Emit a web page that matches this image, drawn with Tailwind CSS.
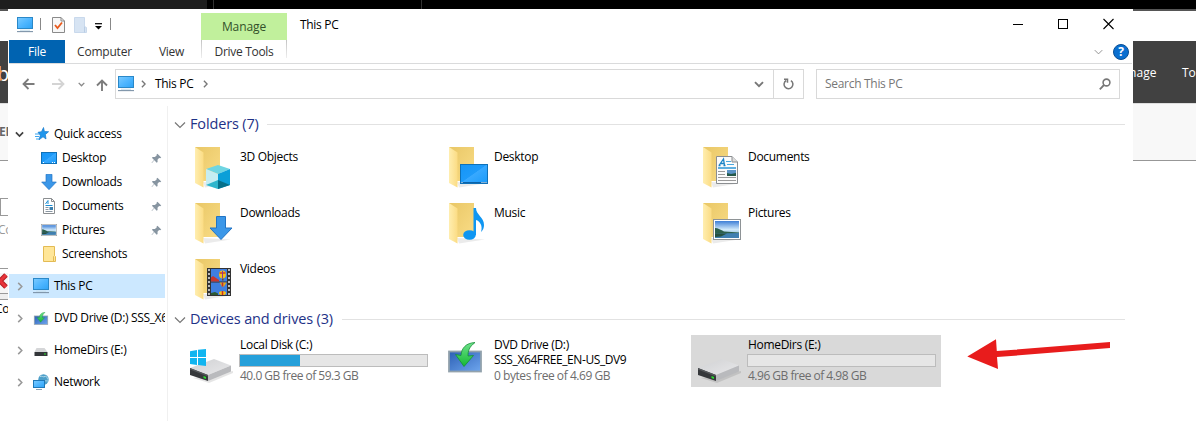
<!DOCTYPE html>
<html lang="en">
<head>
<meta charset="utf-8">
<title>This PC</title>
<script src="https://cdn.jsdelivr.net/npm/@tailwindcss/browser@4"></script>
</head>
<body class="relative h-[421px] w-[1196px] overflow-hidden bg-white font-['Open_Sans',sans-serif] text-[12px] leading-4 tracking-[-0.3px] text-black">

<svg class="absolute h-0 w-0">
  <defs>
    <linearGradient id="scr" x1="0" y1="0" x2="1" y2="1"><stop offset="0" stop-color="#7ccbff"/><stop offset=".5" stop-color="#4fb6ff"/><stop offset="1" stop-color="#2ea3f5"/></linearGradient>
    <linearGradient id="desk" x1="0" y1="0" x2="1" y2="1"><stop offset="0" stop-color="#1495f7"/><stop offset=".48" stop-color="#1e9bfa"/><stop offset=".5" stop-color="#38a9ff"/><stop offset="1" stop-color="#1a9bfa"/></linearGradient>
    <linearGradient id="fback" x1="0" y1="0" x2="1" y2="1"><stop offset="0" stop-color="#e9c766"/><stop offset="1" stop-color="#f9dc86"/></linearGradient>
    <linearGradient id="ffront" x1="0" y1="0" x2="1" y2="0"><stop offset="0" stop-color="#ffeeb0"/><stop offset="1" stop-color="#fbdc84"/></linearGradient>
    <linearGradient id="dtop" x1="0" y1="0" x2="1" y2="1"><stop offset="0" stop-color="#d0d1d3"/><stop offset="1" stop-color="#e8e8ea"/></linearGradient>
    <linearGradient id="sky" x1="0" y1="0" x2="0" y2="1"><stop offset="0" stop-color="#3e7fd6"/><stop offset=".5" stop-color="#cfe8fa"/><stop offset="1" stop-color="#5f9fc4"/></linearGradient>
    <linearGradient id="dvd" x1="0" y1="0" x2="1" y2="1"><stop offset="0" stop-color="#2c5fb4"/><stop offset="1" stop-color="#6ea6ee"/></linearGradient>
    <linearGradient id="grn" x1="0" y1="0" x2="0" y2="1"><stop offset="0" stop-color="#6fe28c"/><stop offset="1" stop-color="#14b832"/></linearGradient>
    <symbol id="pc" viewBox="0 0 16 16"><rect x=".5" y=".5" width="15" height="11" fill="url(#scr)" stroke="#2a88c8"/><path d="M3 13.2h10" stroke="#c5dcea" stroke-width="1"/><path d="M0 14.6h16" stroke="#7d93a8" stroke-width="1.1"/></symbol>
    <symbol id="down" viewBox="0 0 24 24"><path d="M7.500.5h9v11.500h6.500L12 23.500 1 12h6.500z" fill="#3b97e8" stroke="#2274c4"/></symbol>
    <symbol id="deskicon" viewBox="0 0 28 20"><rect x=".5" y=".5" width="27" height="19" fill="url(#desk)" stroke="#0f71b8"/><path d="M1 18.500h26" stroke="#0b62a8"/><path d="M1.500 18.500h1m19 0h1m1 0h1m1 0h1" stroke="#fff"/></symbol>
    <symbol id="docicon" viewBox="0 0 22 28"><path d="M.5.5h15.500l5.500 5.500v21.500H.5z" fill="#fbfbfb" stroke="#8b8e91"/><path d="M16 .5v5.500h5.500" fill="#ddd" stroke="#8b8e91"/><path d="M3 9.500l4.500-6.500 1 6.500M4.500 7.500h4M2.500 9.500h2M7.500 9.500h2" fill="none" stroke="#1b83c6" stroke-width="1.300"/><path d="M10 5.500h5M11 8.500h7" stroke="#4aa7de"/><path d="M2 12h18" stroke="#1c8ed4" stroke-width="1.400"/><path d="M2 15.500h7M2 18.500h7M2 21.500h18M2 24.500h18" stroke="#999"/><rect x="11" y="14" width="9" height="6" fill="#5b94c8"/><path d="M11 17l4 1 5-1v3h-9z" fill="#265a4a"/></symbol>
    <symbol id="picicon" viewBox="0 0 28 21"><rect x=".5" y=".5" width="27" height="20" fill="#fff" stroke="#8e9396"/><rect x="2" y="2" width="24" height="17" fill="url(#sky)"/><path d="M2 9c3 0 6 2 9 3.500l15 1v1.500H2z" fill="#2c5f4c"/><path d="M2 14.500l24-.5v5H2z" fill="#3f7fb0"/><path d="M2 14.500h12l-6 3-6 .5z" fill="#26503f"/></symbol>
    <symbol id="pin" viewBox="0 0 12 12"><path d="M7 .8L11.200 5l-1.200.6-1.200-.2-1.700 2 .1 2.300-1 .8-2.500-2.500L1 11l-.4-.4L3.300 7.600 1 5.300l.9-1 2.300.1 2-1.700L6 1.800z" fill="#8795a1"/></symbol>
    <symbol id="chev" viewBox="0 0 6 10"><path d="M1 1l4 4-4 4" fill="none" stroke="currentColor" stroke-width="1.700"/></symbol>
    <symbol id="vee" viewBox="0 0 12 8"><path d="M1 1.500l5 5 5-5" fill="none" stroke="currentColor" stroke-width="1.200"/></symbol>
    <symbol id="veeb" viewBox="0 0 10 7"><path d="M1 1.200l4 4 4-4" fill="none" stroke="currentColor" stroke-width="1.900"/></symbol>
    <symbol id="folder" viewBox="0 0 40 42"><path d="M8 35l28 1.500-26 4z" fill="#000" opacity=".08"/><path d="M0 0h25v34H8z" fill="url(#fback)"/><path d="M0 0l8.500 5.500v35L0 36z" fill="url(#ffront)"/></symbol>
    <symbol id="drive" viewBox="0 0 44 24"><path d="M4 19l16 5 24-10v-2z" fill="#000" opacity=".1"/><path d="M1 9L25 0l17 6.500-23 9.500z" fill="url(#dtop)"/><path d="M19 16l23-9.500v6L19 22z" fill="#b9babd"/><path d="M1 9l18 7v6L1 16z" fill="#36383b"/><path d="M1 9l18 7v1.500L1 10.500z" fill="#55585b"/><path d="M14.500 17l2.500.9v2l-2.500-.9z" fill="#28e02b"/></symbol>
    <symbol id="dvdicon" viewBox="0 0 34 31"><rect x="1" y="9.500" width="32" height="20" fill="url(#dvd)" stroke="#93a2ac" stroke-width="1.800"/><path d="M27 0.500C18 1 13.500 6 13 13.500L7.500 12.500 16 24.500 25.500 13.500 20 14c0-5 1-9 7-13.500z" fill="url(#grn)" stroke="#158f36" stroke-width=".8"/></symbol>
  </defs>
</svg>

<!-- application behind the explorer window -->
<div class="flex h-[421px] flex-col overflow-hidden">
  <div class="flex h-[9px] shrink-0"><div class="w-[207px] bg-[#1e1e1e]"></div><div class="w-[6px] bg-black"></div><div class="w-px bg-[#333]"></div><div class="w-[207px] bg-black"></div><div class="w-px bg-[#333]"></div><div class="flex-1 bg-black"></div></div>
  <div class="h-[2px] shrink-0 bg-[#555]"></div>
  <div class="h-[30px] shrink-0 bg-white"></div>
  <div class="flex h-[62px] shrink-0 items-center justify-between bg-[#414141] text-[12px] text-white">
    <span class="relative -left-[3px] top-[2px] text-[20px] leading-6"><span class="absolute left-0 top-0 h-5 w-[5px] overflow-hidden text-[#f09030]">b</span>b</span>
    <div class="flex w-[74px] justify-between whitespace-nowrap pt-[2px] tracking-[0px]"><span>Image</span><span class="w-[14px]">Tools</span></div>
  </div>
  <div class="flex h-[58px] shrink-0 items-center border-b border-t border-b-[#979797] border-t-[#ddd] bg-[#f8f8f8]"><span class="-ml-px text-[12px] font-bold text-[#666]">EN</span></div>
  <div class="flex w-2 flex-1 flex-col overflow-hidden">
    <div class="mt-[37px] h-[18px] w-4 shrink-0 border border-[#999]"></div>
    <div class="-ml-[2px] mt-[6px] shrink-0 text-[12px] text-[#999]">Co</div>
    <div class="mt-[30px] h-px shrink-0 bg-[#999]"></div>
    <div class="mt-[4px] h-[20px] shrink-0 bg-[#f5f5f5]"><svg class="-ml-2 h-4 w-4" viewBox="0 0 16 16"><path d="M2 2l12 12M14 2L2 14" stroke="#b32025" stroke-width="5"/><path d="M2 2l12 12M14 2L2 14" stroke="#e8343a" stroke-width="3"/></svg></div>
    <div class="h-[7px] shrink-0 border-b border-t border-[#999] bg-[#eee]"></div>
    <div class="-ml-[5px] mt-px shrink-0">Co</div>
  </div>
</div>

<!-- explorer window -->
<div class="absolute left-2 top-[9px] flex h-[412px] w-[1125px] flex-col bg-white pl-px">
  <!-- title bar -->
  <div class="flex h-[31px] shrink-0">
    <div class="flex w-[192px] items-start pl-2 pt-2">
      <svg class="h-4 w-4"><use href="#pc"/></svg>
      <div class="ml-[7px] mt-px h-3 w-px bg-[#888]"></div>
      <svg class="ml-[11px] h-4 w-[13px]" viewBox="0 0 13 16"><path d="M.5.5h8.500l3.500 3.500v11.500H.5z" fill="#f7f7f7" stroke="#8a8a8a"/><path d="M9 .5v3.500h3.500" fill="none" stroke="#8a8a8a"/><path d="M3 8l2.500 3L10 5.500" fill="none" stroke="#e8591c" stroke-width="1.800"/></svg>
      <svg class="ml-[9px] h-4 w-[13px]" viewBox="0 0 13 16"><path d="M.5.5h10v9l2 1v5H.5z" fill="#d7e4f3" stroke="#c9d9ec"/><path d="M10.500 9.500v6" stroke="#b9cde4"/></svg>
      <svg class="ml-2 mt-[6px] h-[7px] w-[7px]" viewBox="0 0 7 7"><path d="M0 .7h7" stroke="#000" stroke-width="1.200"/><path d="M0 3h7L3.500 6.500z"/></svg>
      <div class="ml-2 mt-px h-3 w-px bg-[#888]"></div>
    </div>
    <div class="mt-1 flex w-[86px] items-center justify-center bg-[#c1f09c] pt-px tracking-[-0.1px] text-[#33502a]">Manage</div>
    <span class="ml-[13px] mt-2">This PC</span>
    <div class="ml-auto flex items-start pr-[19px] pt-[9px]">
      <svg class="mr-[35px] h-[12px] w-[10px]" viewBox="0 0 10 12"><path d="M0 6.500h10" stroke="#000"/></svg>
      <svg class="mr-[35px] h-[12px] w-[10px]" viewBox="0 0 10 12"><rect x=".5" y="1.500" width="9" height="9" fill="none" stroke="#000"/></svg>
      <svg class="h-[12px] w-[11px]" viewBox="0 0 11 12"><path d="M.5 1l10 10M10.500 1l-10 10" stroke="#000" stroke-width="1.100"/></svg>
    </div>
  </div>
  <!-- ribbon tabs -->
  <div class="mr-px flex h-[24px] shrink-0 border-b border-[#dadbdc] pt-0 text-[#333]">
    <div class="flex w-14 items-center justify-center bg-[#0063b1] text-white">File</div>
    <div class="flex w-[79px] items-center justify-center pt-px tracking-[-0.2px]">Computer</div>
    <div class="flex w-[55px] items-center justify-center pt-px">View</div><div class="w-[2px]"></div>
    <div class="flex w-[86px] items-center justify-center"><div class="mb-auto h-[18px] w-px bg-gradient-to-b from-[#c4c4c4] to-[#eee]"></div><span class="flex-1 pt-px text-center">Drive Tools</span><div class="mb-auto h-[18px] w-px bg-gradient-to-b from-[#c4c4c4] to-[#eee]"></div></div>
    <div class="ml-auto flex items-center pr-[3px]">
      <svg class="mr-[10px] h-[6px] w-[9px] text-[#888]"><use href="#vee"/></svg>
      <div class="flex h-4 w-4 items-center justify-center rounded-full border border-[#0a4f94] bg-[#0a6fd0] text-[12px] font-bold text-white">?</div>
    </div>
  </div>
  <!-- address row -->
  <div class="flex h-[42px] shrink-0 items-start pt-[5px] text-[#777]">
    <div class="flex h-[30px] w-[106px] items-center pl-[13px]">
      <svg class="h-[12px] w-[13px]" viewBox="0 0 13 12"><path d="M12.500 6H1.500M6.500 1L1.500 6l5 5" fill="none" stroke="#7c7c7c" stroke-width="1.800"/></svg>
      <svg class="ml-[17px] h-[12px] w-[13px]" viewBox="0 0 13 12"><path d="M0 6h11.500M6.500 1l5 5-5 5" fill="none" stroke="#d4d4d4" stroke-width="1.800"/></svg>
      <svg class="ml-[13px] h-[5px] w-[7px] text-[#888]"><use href="#veeb"/></svg>
      <svg class="ml-[11px] mt-[2px] h-[12px] w-[12px]" viewBox="0 0 12 12"><path d="M6 12V1.500M1 6.500l5-5 5 5" fill="none" stroke="#7c7c7c" stroke-width="1.900"/></svg>
    </div>
    <div class="flex h-[30px] w-[689px] items-center border border-[#d9d9d9] pl-[2px]">
      <svg class="h-4 w-4"><use href="#pc"/></svg>
      <svg class="ml-[7px] h-[8px] w-[5px]"><use href="#chev"/></svg>
      <span class="ml-[9px] w-[40px] whitespace-nowrap text-black">This PC</span>
      <svg class="ml-[8px] h-[8px] w-[5px]"><use href="#chev"/></svg>
      <svg class="ml-auto mr-[9px] mt-px h-[7px] w-[10px]"><use href="#veeb"/></svg>
      <div class="flex h-full w-[30px] items-center justify-center border-l border-[#d9d9d9]"><svg class="h-[12px] w-[11px]" viewBox="0 0 11 12"><path d="M3.200 2.500a4.400 4.400 0 1 0 4.700.1M1 1.200h3.500v3.600" fill="none" stroke="#777" stroke-width="1.500"/></svg></div>
    </div>
    <div class="ml-3 flex h-[30px] w-[304px] items-center justify-between border border-[#d9d9d9] pl-2 pr-2"><span>Search This PC</span><svg class="h-[12px] w-[12px]" viewBox="0 0 12 12"><circle cx="7.500" cy="4.500" r="3.400" fill="none" stroke="#777" stroke-width="1.600"/><path d="M5 7L.8 11.300" stroke="#777" stroke-width="1.800"/></svg></div>
  </div>

  <div class="flex min-h-0 flex-1">
    <!-- navigation pane -->
    <div class="w-[159px] shrink-0 border-r border-[#f0f0f0] pr-[2px] pt-4">
      <div class="flex h-6 items-center pl-[6px]"><svg class="h-[7px] w-[9px] text-[#404040]"><use href="#veeb"/></svg>
        <svg class="ml-[11px] h-[14px] w-[14px]" viewBox="0 0 14 14"><path d="M8.500.5l.9 4 4.200.2-3.200 2.800.6 4.500L8 9.800 4 12.800l1.300-4.500L3 5.300l3.500-.6z" fill="#1f96ec" stroke="#1479cc" stroke-width=".7"/><path d="M0 7h4M0 9.500h4M1 12h3" stroke="#3ba5ee"/></svg>
        <span class="ml-[5px]">Quick access</span></div>
      <div class="flex h-6 items-center pl-8 pr-[3px]"><svg class="h-[12px] w-4" viewBox="0 0 16 12"><rect x=".5" y=".5" width="15" height="11" fill="url(#desk)" stroke="#0f71b8"/><path d="M2 10.500h1m8 0h1m1 0h1" stroke="#fff"/></svg><span class="ml-[5px]">Desktop</span><svg class="ml-auto h-[11px] w-[11px]"><use href="#pin"/></svg></div>
      <div class="flex h-6 items-center pl-8 pr-[3px]"><svg class="h-4 w-4"><use href="#down"/></svg><span class="ml-[5px]">Downloads</span><svg class="ml-auto h-[11px] w-[11px]"><use href="#pin"/></svg></div>
      <div class="flex h-6 items-center pl-8 pr-[3px]"><svg class="h-4 w-4" viewBox="0 0 16 16"><path d="M2.500.5h8l3 3v12h-11z" fill="#fff" stroke="#8b8e91"/><path d="M10.500.5v3h3" fill="none" stroke="#8b8e91"/><path d="M4.500 6L7 2.500V6M4.500 7.500h7" fill="none" stroke="#1c8ed4"/><path d="M4.500 9.500h3M4.500 11.500h3M4.500 13.500h7" stroke="#8a97a3"/><path d="M8.500 10.500h3.500" stroke="#3a7fae" stroke-width="3"/></svg><span class="ml-[5px]">Documents</span><svg class="ml-auto h-[11px] w-[11px]"><use href="#pin"/></svg></div>
      <div class="flex h-6 items-center pl-8 pr-[3px]"><svg class="h-[12px] w-4"><use href="#picicon"/></svg><span class="ml-[5px]">Pictures</span><svg class="ml-auto h-[11px] w-[11px]"><use href="#pin"/></svg></div>
      <div class="flex h-6 items-center pl-8"><svg class="h-4 w-4" viewBox="0 0 16 16"><path d="M2.500.5h11v9l1 1v5h-12z" fill="#ffe698" stroke="#e3bb54"/><path d="M12.500 15.500v-5l1-1" fill="none" stroke="#e3bb54"/></svg><span class="ml-[5px]">Screenshots</span></div>
      <div class="mt-2 flex h-6 items-center bg-[#cce8ff] pl-2"><svg class="h-[9px] w-[6px] text-[#999]"><use href="#chev"/></svg><svg class="ml-[10px] h-4 w-4"><use href="#pc"/></svg><span class="ml-[5px]">This PC</span></div>
      <div class="mt-2 flex h-6 items-center pl-2"><svg class="h-[9px] w-[6px] shrink-0 text-[#999]"><use href="#chev"/></svg><svg class="ml-[10px] h-[13px] w-4 shrink-0"><use href="#dvdicon"/></svg><span class="ml-[5px] w-[111px] overflow-hidden whitespace-nowrap tracking-[-0.35px]">DVD Drive (D:) SSS_X64FREE</span></div>
      <div class="mt-2 flex h-6 items-center pl-2"><svg class="h-[9px] w-[6px] text-[#999]"><use href="#chev"/></svg><svg class="ml-[10px] mt-1 h-[9px] w-4" viewBox="0 0 16 9"><path d="M3.500 0h8l3 4h-13z" fill="#d5d6d8"/><rect x="1.500" y="4" width="13" height="4" fill="#333639"/><path d="M11 6h2" stroke="#2be02e" stroke-width="1.200"/></svg><span class="ml-[5px]">HomeDirs (E:)</span></div>
      <div class="mt-2 flex h-6 items-center pl-2"><svg class="h-[9px] w-[6px] text-[#999]"><use href="#chev"/></svg><svg class="ml-[10px] h-4 w-4" viewBox="0 0 16 16"><circle cx="10.500" cy="5.500" r="5.200" fill="#4d9fc9"/><path d="M7 2.500c2-1 3 1 5 0s2 2 3 3M10 9c1-3 3-2 5-2" stroke="#b5dcec" fill="none"/><rect x=".5" y="6.500" width="11" height="7" fill="url(#scr)" stroke="#1e78b8"/><path d="M3 15.500h6" stroke="#8ba3b5"/></svg><span class="ml-[5px]">Network</span></div>
    </div>

    <!-- content pane -->
    <div class="flex-1 pl-[6px] pr-2">
      <div class="flex h-[22px] items-center pt-[14px]"><svg class="mt-0.5 h-[8px] w-[12px] shrink-0 text-[#777]"><use href="#vee"/></svg><span class="ml-1 w-[77px] whitespace-nowrap text-[14.500px] leading-5 tracking-[-0.15px] text-[#1e3287]">Folders (7)</span><div class="h-px flex-1 bg-[#e2e2e2]"></div></div>
      <div class="grid grid-cols-[254px_254px_254px] grid-rows-[56px_56px_56px] pl-[21px] pt-[19px]">
        <div class="flex"><div class="relative h-[42px] w-[45px]"><svg class="h-[42px] w-10"><use href="#folder"/></svg><svg class="absolute left-[11px] top-[18px] h-6 w-6" viewBox="0 0 24 24"><path d="M12 0l12 4-12 5L0 4z" fill="#6fd5e2"/><path d="M0 4l12 5v15L0 20z" fill="#c6edf2"/><path d="M24 4L12 9v15l12-4z" fill="#0b9fd8"/><path d="M24 20l-12-5v9z" fill="#05708a"/><path d="M0 20l12-5v9z" fill="#2fb5cc"/></svg></div><span class="mt-[2px]">3D Objects</span></div>
        <div class="flex"><div class="relative h-[42px] w-[45px]"><svg class="h-[42px] w-10"><use href="#folder"/></svg><svg class="absolute left-[11px] top-[17px] h-5 w-7"><use href="#deskicon"/></svg></div><span class="mt-[2px]">Desktop</span></div>
        <div class="flex"><div class="relative h-[42px] w-[45px]"><svg class="h-[42px] w-10"><use href="#folder"/></svg><svg class="absolute left-[13px] top-[9px] h-7 w-[22px]"><use href="#docicon"/></svg></div><span class="mt-[2px]">Documents</span></div>
        <div class="flex"><div class="relative h-[42px] w-[45px]"><svg class="h-[42px] w-10"><use href="#folder"/></svg><svg class="absolute left-[14px] top-[13px] h-6 w-6"><use href="#down"/></svg></div><span class="mt-[2px]">Downloads</span></div>
        <div class="flex"><div class="relative h-[42px] w-[45px]"><svg class="h-[42px] w-10"><use href="#folder"/></svg><svg class="absolute left-[14px] top-[5px] h-8 w-[22px]" viewBox="0 0 22 32"><ellipse cx="6.500" cy="27" rx="6.300" ry="4.800" fill="#0f96f2"/><path d="M10.500 27V0H13c0 7 8 9 8 17 0 3-1 5-3 7 2-6-1-11-5-12v15z" fill="#0f96f2"/></svg></div><span class="mt-[2px]">Music</span></div>
        <div class="flex"><div class="relative h-[42px] w-[45px]"><svg class="h-[42px] w-10"><use href="#folder"/></svg><svg class="absolute left-[10px] top-[16px] h-[21px] w-7"><use href="#picicon"/></svg></div><span class="mt-[2px]">Pictures</span></div>
        <div class="flex"><div class="relative h-[42px] w-[45px]"><svg class="h-[42px] w-10"><use href="#folder"/></svg><svg class="absolute left-[12px] top-[9px] h-7 w-6" viewBox="0 0 24 28"><path d="M0 0h24v28H0z" fill="#333"/><path d="M4 1h16v12.500H4zM4 14.500h16V27H4z" fill="#3f7fe0"/><path d="M2 1v27M22 1v27" stroke="#ddd" stroke-width="1.600" stroke-dasharray="2 2"/><path d="M4 9.500l2-1.500 6 4v1.500H4z" fill="#c9362c"/><ellipse cx="15.500" cy="6.500" rx="3.500" ry="4" fill="#f2c21c"/><path d="M12.500 5h6" stroke="#d02a22" stroke-width="1.300"/><path d="M15.500 3v7" stroke="#8a3a9a"/><path d="M15 10.500h1.500v2H15z" fill="#7a4a20"/><path d="M12.500 14.500h7L17 18.500h-2z" fill="#e0a81c"/><path d="M15.500 14.500v4" stroke="#c02a32" stroke-width="1.500"/><path d="M4 25l4-1 3 1.500V27H4z" fill="#2c5a34"/><ellipse cx="15.500" cy="25" rx="3.500" ry="2" fill="#f2c21c"/><path d="M15.500 23v4" stroke="#d02a22" stroke-width="1.500"/></svg></div><span class="mt-[2px]">Videos</span></div>
      </div>
      <div class="-mt-[7px] flex h-[22px] items-center"><svg class="mt-0.5 h-[8px] w-[12px] shrink-0 text-[#777]"><use href="#vee"/></svg><span class="ml-1 w-[152px] whitespace-nowrap text-[14.500px] leading-5 tracking-[-0.15px] text-[#1e3287]">Devices and drives (3)</span><div class="h-px flex-1 bg-[#e2e2e2]"></div></div>
      <div class="mt-[5px] flex gap-1 pl-[9px]">
        <div class="flex h-[52px] w-[250px]"><div class="relative h-full w-[56px]"><svg class="absolute left-[6px] top-[24px] h-6 w-11"><use href="#drive"/></svg><svg class="absolute left-[7px] top-[14px] h-[17px] w-4" viewBox="0 0 16 16" preserveAspectRatio="none"><path d="M0 2l7-1v6.500H0zM8 .8L16 0v7.500H8zM0 8.500h7V15l-7-1zM8 8.500h8V16l-8-1z" fill="#11b5f0"/></svg></div>
          <div class="flex flex-1 flex-col pt-[2px]"><span class="pl-px">Local Disk (C:)</span><div class="mt-px h-[13px] w-[189px] border border-[#bcbcbc] bg-[#e6e6e6]"><div class="h-full bg-[#26a0da]" style="width:32%"></div></div><span class="mt-[1px] pl-px tracking-[-0.5px] text-[#6d6d6d]">40.0 GB free of 59.3 GB</span></div></div>
        <div class="flex h-[52px] w-[250px]"><div class="w-[56px] pl-[11px] pt-[7px]"><svg class="h-[31px] w-[34px]"><use href="#dvdicon"/></svg></div>
          <div class="flex flex-1 flex-col pl-px pt-[2px]"><span class="leading-[15px]">DVD Drive (D:)</span><span class="leading-[15px] tracking-[-0.4px]">SSS_X64FREE_EN-US_DV9</span><span class="mt-px tracking-[-0.45px] text-[#6d6d6d]">0 bytes free of 4.69 GB</span></div></div>
        <div class="flex h-[52px] w-[250px] bg-[#d9d9d9]"><div class="w-[56px] pl-[6px] pt-[24px]"><svg class="h-6 w-11"><use href="#drive"/></svg></div>
          <div class="flex flex-1 flex-col pt-[2px]"><span class="pl-px">HomeDirs (E:)</span><div class="mt-px h-[13px] w-[189px] border border-[#bcbcbc] bg-[#e6e6e6]"></div><span class="mt-[1px] pl-px tracking-[-0.5px] text-[#6d6d6d]">4.96 GB free of 4.98 GB</span></div></div>
      </div>
    </div>
  </div>
</div>

<!-- annotation arrow -->
<svg class="absolute left-[960px] top-[335px] h-[40px] w-[160px]" viewBox="960 335 160 40"><path d="M967.300 356.500L996 339.200l.8 11.900 113.200-9v6l-113 9 1 12z" fill="#e81c1c"/></svg>
</body>
</html>
